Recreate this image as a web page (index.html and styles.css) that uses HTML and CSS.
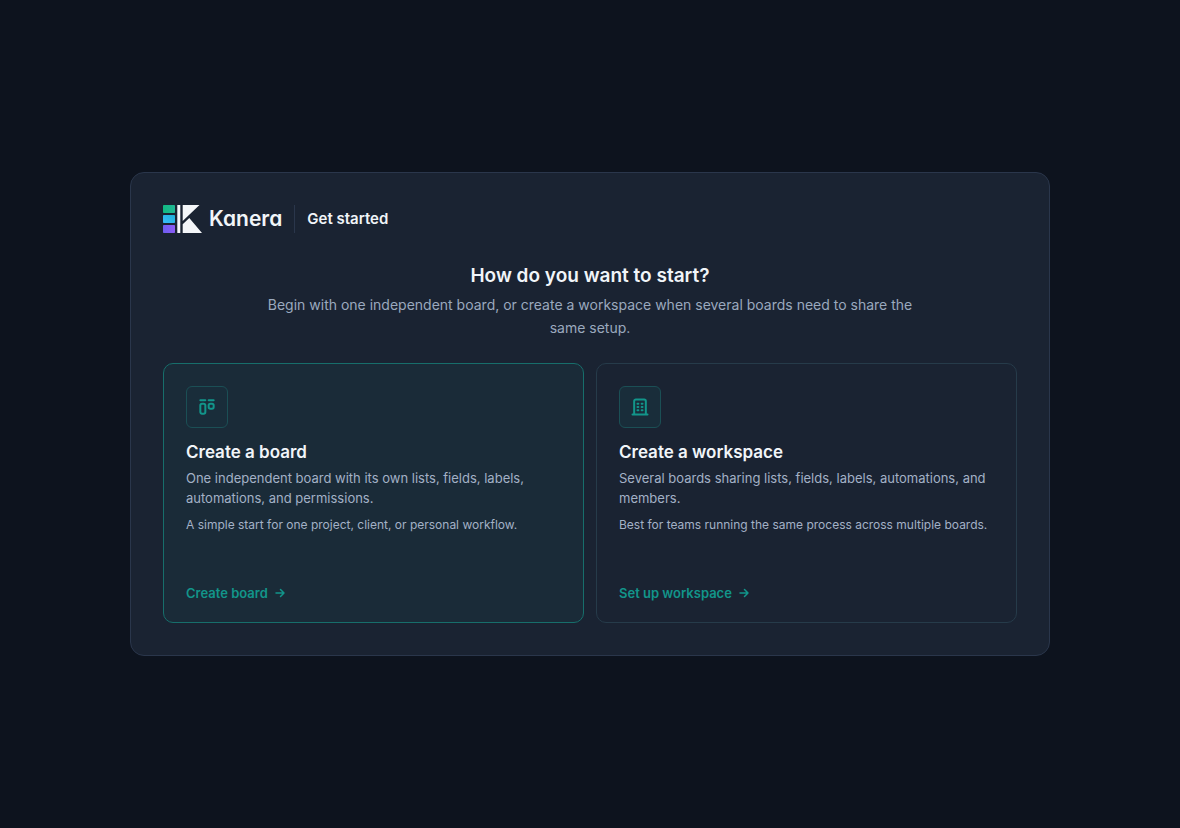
FILE: index.html
```html
<!DOCTYPE html>
<html lang="en">
<head>
<meta charset="utf-8">
<meta name="viewport" content="width=device-width, initial-scale=1">
<title>Kanera – Get started</title>
<link rel="stylesheet" href="styles.css">
</head>
<body>
<main class="panel">
  <header class="brand">
    <svg class="brand-mark" viewBox="0 0 39 28" aria-hidden="true">
      <defs>
        <linearGradient id="g1" x1="0" x2="1"><stop offset="0" stop-color="#10b981"/><stop offset="1" stop-color="#22b795"/></linearGradient>
        <linearGradient id="g2" x1="0" x2="1" y1="1" y2="0"><stop offset="0" stop-color="#38bdf8"/><stop offset="1" stop-color="#1eb0d8"/></linearGradient>
        <linearGradient id="g3" x1="0" x2="1"><stop offset="0" stop-color="#6d5df0"/><stop offset="1" stop-color="#8b5cf6"/></linearGradient>
      </defs>
      <rect x="0" y="0" width="12" height="8" rx=".8" fill="url(#g1)"/>
      <rect x="0" y="10" width="12" height="8" rx=".8" fill="url(#g2)"/>
      <rect x="0" y="20" width="12" height="8" rx=".8" fill="url(#g3)"/>
      <path d="M14.3 0h3v28h-3z M19.7 0H36.5L19.7 16z M19.7 19.3L26.3 13L39 28H19.7z" fill="#f4f6f9"/>
    </svg>
    <span class="brand-name">Kanera</span>
    <span class="brand-step">Get started</span>
  </header>

  <section class="intro">
    <h1>How do you want to start?</h1>
    <p>Begin with one independent board, or create a workspace when several boards need to share the same setup.</p>
  </section>

  <div class="choices">
    <button type="button" class="choice choice-primary">
      <span class="choice-icon">
        <svg viewBox="0 0 24 24" aria-hidden="true"><path d="M4 4h6M14 4h6M4 10a2 2 0 0 1 2-2h2a2 2 0 0 1 2 2v8a2 2 0 0 1-2 2H6a2 2 0 0 1-2-2zM14 10a2 2 0 0 1 2-2h2a2 2 0 0 1 2 2v2a2 2 0 0 1-2 2h-2a2 2 0 0 1-2-2z"/></svg>
      </span>
      <span class="choice-title">Create a board</span>
      <span class="choice-text">One independent board with its own lists, fields, labels, automations, and permissions.</span>
      <span class="choice-note">A simple start for one project, client, or personal workflow.</span>
      <span class="choice-action">Create board
        <svg viewBox="0 0 24 24" aria-hidden="true"><path d="M4 12h16M13 5l7 7-7 7"/></svg>
      </span>
    </button>
    <button type="button" class="choice">
      <span class="choice-icon">
        <svg viewBox="0 0 24 24" aria-hidden="true"><path d="M3 21h18M9 8h1M9 12h1M9 16h1M14 8h1M14 12h1M14 16h1M5 21V5a2 2 0 0 1 2-2h10a2 2 0 0 1 2 2v16"/></svg>
      </span>
      <span class="choice-title">Create a workspace</span>
      <span class="choice-text">Several boards sharing lists, fields, labels, automations, and members.</span>
      <span class="choice-note">Best for teams running the same process across multiple boards.</span>
      <span class="choice-action">Set up workspace
        <svg viewBox="0 0 24 24" aria-hidden="true"><path d="M4 12h16M13 5l7 7-7 7"/></svg>
      </span>
    </button>
  </div>
</main>
</body>
</html>
```
FILE: styles.css
```css
* { box-sizing: border-box; }

body {
  margin: 0;
  min-height: 100vh;
  padding: 24px;
  display: flex;
  align-items: center;
  justify-content: center;
  background: #0d131e;
  color: #f1f5f9;
  font-family: Inter, "Liberation Sans", sans-serif;
}

.panel {
  width: 100%;
  max-width: 920px;
  padding: 32px;
  background: #1a2332;
  border: 1px solid #2a364b;
  border-radius: 14px;
}

.brand {
  display: flex;
  align-items: center;
  height: 28px;
}

.brand-mark { width: 39px; height: 28px; }

.brand-name {
  margin-left: 7px;
  font-size: 21px;
  line-height: 28px;
  font-weight: 600;
  font-feature-settings: "cv11";
}

.brand-step {
  margin-left: 12px;
  padding-left: 12px;
  border-left: 1px solid #2a364b;
  font-size: 15px;
  line-height: 28px;
  font-weight: 600;
}

.intro {
  max-width: 660px;
  margin: 28px auto 24px;
  text-align: center;
}

.intro h1 {
  margin: 0 0 2px;
  font-size: 19px;
  line-height: 30px;
  font-weight: 600;
}

.intro p {
  margin: 0;
  color: #9aa9be;
  font-size: 14px;
  line-height: 23px;
}

.choices {
  display: grid;
  grid-template-columns: repeat(auto-fit, minmax(280px, 1fr));
  gap: 12px;
}

.choice {
  display: flex;
  flex-direction: column;
  align-items: flex-start;
  min-height: 260px;
  padding: 22px;
  border: 1px solid #263b4a;
  border-radius: 10px;
  background: #1a2332;
  color: inherit;
  font-family: inherit;
  text-align: left;
  cursor: pointer;
}

.choice-primary {
  background: #1a2b38;
  border-color: #176e6b;
}

.choice-icon {
  display: grid;
  place-items: center;
  width: 42px;
  height: 42px;
  margin-bottom: 12px;
  border: 1px solid #1b4f55;
  border-radius: 6px;
  background: #192d3a;
}

.choice svg {
  fill: none;
  stroke: #12958a;
  stroke-width: 2;
  stroke-linecap: round;
  stroke-linejoin: round;
}

.choice-icon svg { width: 20px; height: 20px; }

.choice-title {
  margin-bottom: 4px;
  font-size: 17px;
  line-height: 24px;
  font-weight: 600;
}

.choice-text {
  margin-bottom: 8px;
  color: #a3b1c6;
  font-size: 13px;
  line-height: 20px;
}

.choice-note {
  color: #a3b1c6;
  font-size: 12px;
  line-height: 18px;
}

.choice-action {
  display: flex;
  align-items: center;
  gap: 6px;
  margin-top: auto;
  color: #12958a;
  font-size: 13px;
  line-height: 14px;
  font-weight: 600;
}

.choice-action svg { width: 12px; height: 12px; }

.choice .choice-action svg { stroke-width: 3; }

.choice .choice-icon svg { stroke-width: 2.4; }
```
